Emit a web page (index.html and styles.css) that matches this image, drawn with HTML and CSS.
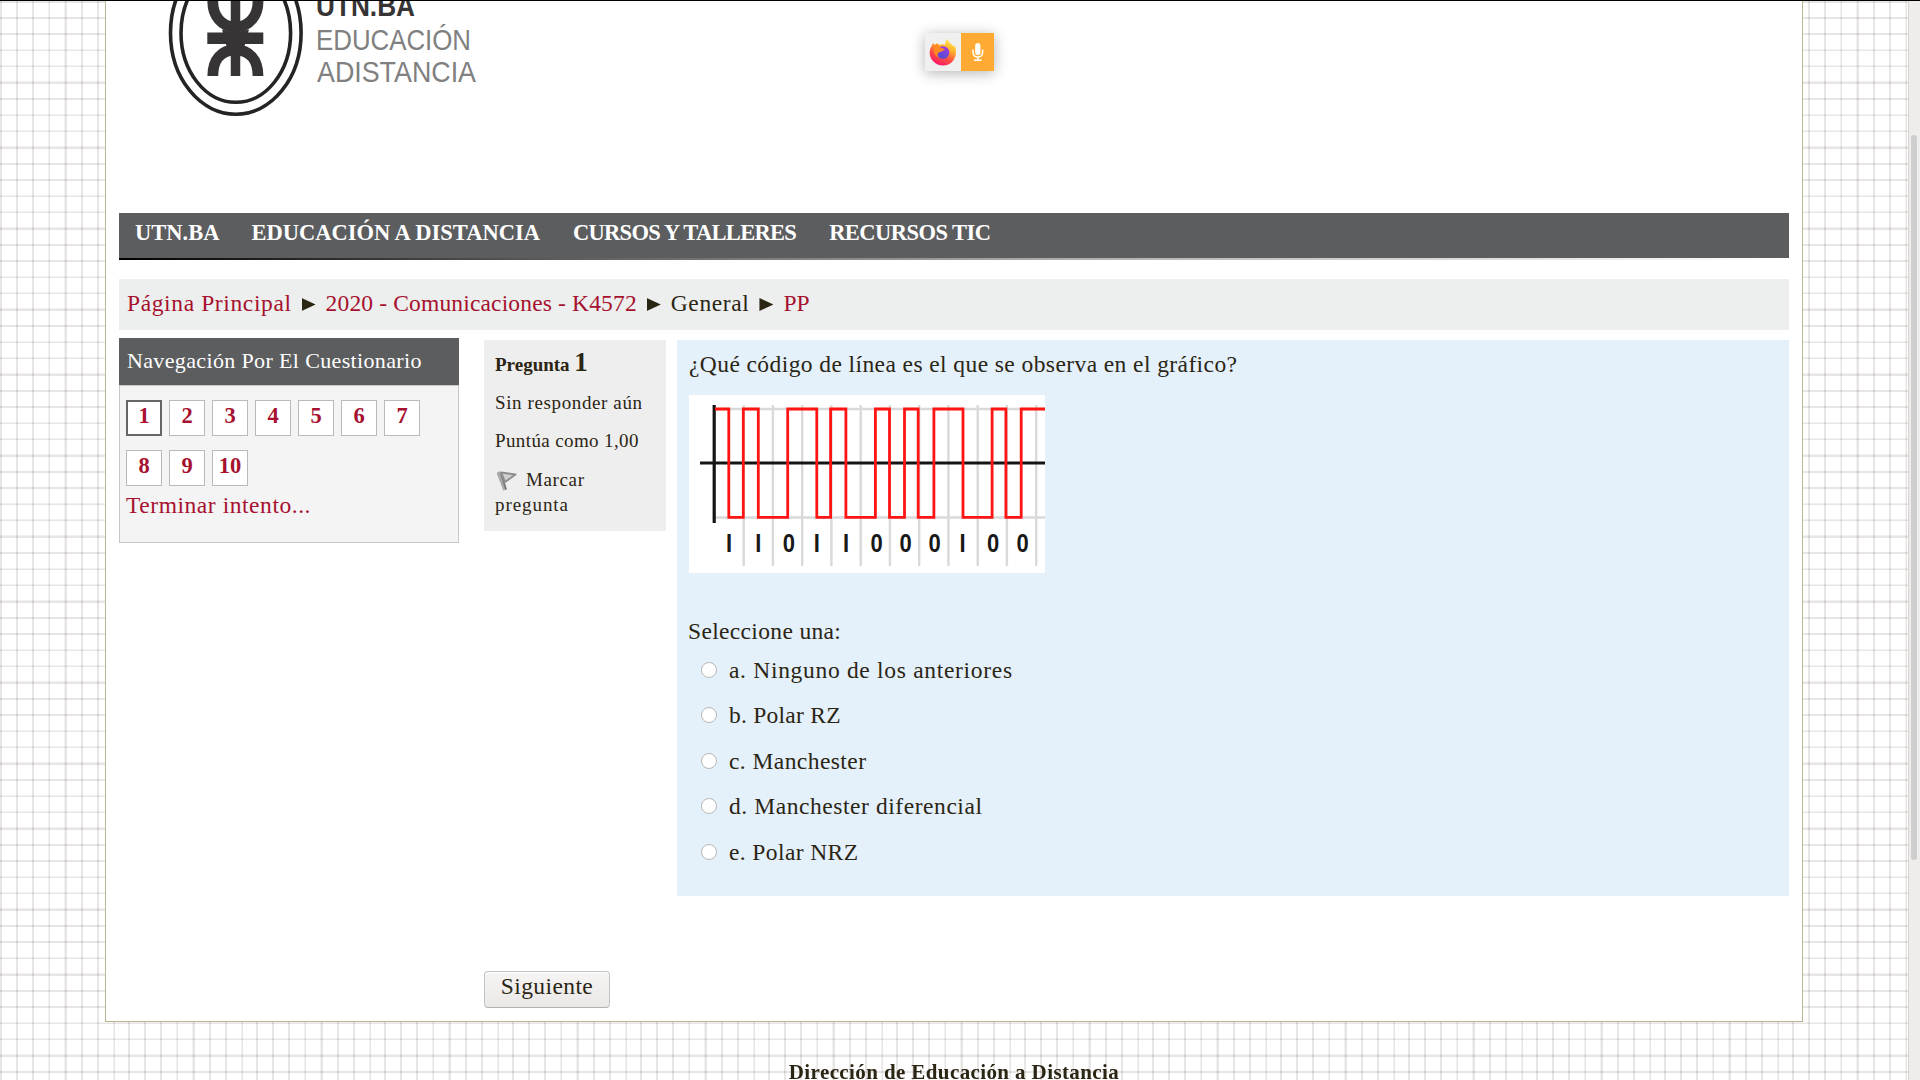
FILE: index.html
```html
<!DOCTYPE html>
<html lang="es">
<head>
<meta charset="utf-8">
<title>PP - UTN.BA Educación a Distancia</title>
<link rel="stylesheet" href="styles.css">
</head>
<body>
<div class="view">
  <div class="canvas">
    <main class="page">
      <header class="header">
        <svg class="logo" width="400" height="130" viewBox="106 0 400 130">
          <g fill="none" stroke="#242424" stroke-width="3.6">
            <ellipse cx="235.8" cy="33" rx="65.3" ry="81.3"/>
            <ellipse cx="235.8" cy="33" rx="54.8" ry="69.3"/>
          </g>
          <g fill="none" stroke="#373435">
            <path d="M235.5 0V76" stroke-width="9.5"/>
            <path d="M207.3 38.2H263.3" stroke-width="11.4"/>
            <path d="M212.8 -6V2C212.8 15 221 27 235.4 27S258 15 258 2V-6" stroke-width="10.8"/>
            <path d="M212.8 76C212.8 59 222 50 235.4 50S258 59 258 76" stroke-width="10.8"/>
          </g>
          <path d="M222 29.500Q232 32 235.400 32T249 29.500L244 48H227z" fill="#373435"/>
          <text class="logo-name" x="316" y="16" textLength="99" lengthAdjust="spacingAndGlyphs">UTN.BA</text>
          <text class="logo-sub" x="316" y="50.2" textLength="155" lengthAdjust="spacingAndGlyphs">EDUCACIÓN</text>
          <text class="logo-sub" x="317" y="82" textLength="159" lengthAdjust="spacingAndGlyphs">ADISTANCIA</text>
        </svg>
      </header>

      <nav class="menu">
        <a>UTN.BA</a>
        <a class="m2">EDUCACIÓN A DISTANCIA</a>
        <a class="m3">CURSOS Y TALLERES</a>
        <a class="m4">RECURSOS TIC</a>
      </nav>

      <div class="crumbs">
        <a class="c1">Página Principal</a><i class="arrow"></i>
        <a class="c2">2020 - Comunicaciones - K4572</a><i class="arrow"></i>
        <span class="c3">General</span><i class="arrow"></i>
        <a>PP</a>
      </div>

      <div class="columns">
        <aside class="block">
          <h2>Navegación Por El Cuestionario</h2>
          <div class="block-body">
            <div class="numbers">
              <a class="current">1</a><a>2</a><a>3</a><a>4</a><a>5</a><a>6</a><a>7</a><a>8</a><a>9</a><a>10</a>
            </div>
            <a class="finish">Terminar intento...</a>
          </div>
        </aside>

        <section class="info">
          <h3>Pregunta <b>1</b></h3>
          <p class="state">Sin responder aún</p>
          <p class="grade">Puntúa como 1,00</p>
          <p class="flag"><svg width="21" height="21" viewBox="0 0 21 21" fill="none" stroke-linejoin="round"><path d="M1 2L8 20" stroke="#aaa" stroke-width="3.5"/><path d="M4 3L9 19.5" stroke="#777" stroke-width="1.8"/><path d="M4 2.5L18.5 4.5L8 12z" stroke="#8d8d8d" stroke-width="2" fill="#d0d0d0"/></svg><span class="mark">Marcar</span> <span class="mark2">pregunta</span></p>
        </section>

        <section class="question">
          <p class="prompt">¿Qué código de línea es el que se observa en el gráfico?</p>
          <svg class="chart" width="356" height="178" viewBox="0 0 356 178">
            <rect width="356" height="178" fill="#fff"/>
            <path d="M26 14H356M26 122.5H356M54.7 10V171M83.9 10V171M113.2 10V171M142.4 10V171M171.7 10V171M200.9 10V171M230.2 10V171M259.4 10V171M288.7 10V171M317.9 10V171M347.2 10V171" stroke="#d9d9d9" stroke-width="2.4" fill="none"/>
            <path d="M25.2 10V128M11 68H356" stroke="#151515" stroke-width="3.2"/>
            <path d="M26 14H39.8V122.3H54.3V14H69.3V122.3H98.7V14H127.8V122.3H141.6V14H156.9V122.3H186.4V14H200.5V122.3H215.5V14H229.2V122.3H244.9V14H274V122.3H303.1V14H316.9V122.3H332.2V14H356" stroke="#ff1414" stroke-width="2.8" fill="none"/>
            <g class="bits" transform="scale(.83 1)">
              <text x="48.4" y="157">I</text><text x="83.4" y="157">I</text><text x="120.3" y="157">0</text><text x="154" y="157">I</text><text x="189.1" y="157">I</text><text x="225.9" y="157">0</text><text x="261" y="157">0</text><text x="296" y="157">0</text><text x="329.7" y="157">I</text><text x="366.5" y="157">0</text><text x="402" y="157">0</text>
            </g>
          </svg>
          <p class="select">Seleccione una:</p>
          <ul class="answers">
            <li><i class="radio"></i><span class="a1">a. Ninguno de los anteriores</span></li>
            <li><i class="radio"></i><span class="a2">b. Polar RZ</span></li>
            <li><i class="radio"></i><span class="a3">c. Manchester</span></li>
            <li><i class="radio"></i><span class="a4">d. Manchester diferencial</span></li>
            <li><i class="radio"></i><span class="a5">e. Polar NRZ</span></li>
          </ul>
        </section>
      </div>

      <button class="next">Siguiente</button>
    </main>
    <footer class="footer">Dirección de Educación a Distancia</footer>
  </div>
  <div class="scrollbar"><div class="thumb"></div></div>

  <div class="sharing">
    <div class="browser">
      <svg width="28" height="28" viewBox="0 0 28 28">
        <defs>
          <linearGradient id="fox" x1=".8" y1="0" x2=".3" y2="1"><stop offset="0" stop-color="#fff04a"/><stop offset=".35" stop-color="#ffb02e"/><stop offset=".65" stop-color="#ff5140"/><stop offset="1" stop-color="#f5156c"/></linearGradient>
          <linearGradient id="globe" x1=".6" y1="0" x2=".3" y2="1"><stop offset="0" stop-color="#a03be0"/><stop offset="1" stop-color="#4a4ed0"/></linearGradient>
        </defs>
        <path d="M18 1C19 4 23 6 24.5 8.500L26 7.500C28 14 27 19 24 23C19 29 9 29 4 23C0 19 0 13 2 9L4 5L6 7L8 5L10 7C12 6 15 6 16 7C16 5 17 2 18 1z" fill="url(#fox)"/>
        <circle cx="14" cy="14.500" r="6.300" fill="url(#globe)"/>
        <path d="M5 7L9 6L11 9.500L16 11C15 13 12 13 11 14C8 15 8 18 10 20C5 18 4 12 5 7z" fill="#ff8a1f"/>
      </svg>
    </div>
    <div class="mic">
      <svg width="12" height="20" viewBox="0 0 12 20" fill="none" stroke="#fff"><rect x="3.200" y="1" width="5.200" height="12" rx="2.600" fill="#fff" stroke="none"/><path d="M1 7.500V10.500C1 16.500 10.600 16.500 10.600 10.500V7.500M5.800 15V18M2 18.200H9.600" stroke-width="1.500"/></svg>
    </div>
  </div>
</div>
</body>
</html>
```
FILE: styles.css
```css
* { box-sizing: border-box; }
body {
  margin: 0;
  color: #2b2514;
  font: 23.5px/30px "Palatino Linotype", "Liberation Serif", serif;
}
p, h2, h3, ul { margin: 0; padding: 0; }
a { color: #a6112f; }

.view {
  position: relative;
  display: flex;
  height: 1080px;
  overflow: hidden;
  border-top: 1px solid #000;
  background: #fff;
}
.canvas {
  flex: 1;
  min-width: 0;
  border-right: 1px solid #d8d2d0;
  background:
    repeating-linear-gradient(90deg, #e8e5e5 0 1.6px, #fff 1.6px 15.6px, #f3f1f1 15.6px 16.25px) 0 0 / 128px 100%,
    #fff;
  position: relative;
}
.canvas::before {
  content: "";
  position: absolute;
  inset: 0;
  background: repeating-linear-gradient(180deg, #e8e5e5 0 1.6px, transparent 1.6px 15.6px, #f3f1f1 15.6px 16.215px);
  mix-blend-mode: multiply;
}

.page {
  position: relative;
  width: 1698px;
  height: 1021px;
  margin-left: 105px;
  padding: 0 13px;
  border: 1px solid #bab894;
  border-top: 0;
  background: #fff;
}
.header { height: 212px; }
.logo { position: relative; top: -1px; display: block; margin-left: -13px; }
.logo-name { font: bold 30px "Liberation Sans", sans-serif; fill: #373435; }
.logo-sub { font: 30px "Liberation Sans", sans-serif; fill: #808080; }

.menu {
  display: flex;
  gap: 33px;
  height: 47px;
  padding-left: 16px;
  background:
    linear-gradient(90deg, #000, #58585a 25%, #aaaaac 55%, #fff) 0 100% / 100% 2px no-repeat,
    #5c5d5f;
  font-weight: bold;
  font-size: 22.5px;
  line-height: 39px;
}
.menu a { color: #fff; white-space: nowrap; }
.m2 { margin-left: -1px; letter-spacing: .0003em; }
.m3 { letter-spacing: -.031em; }
.m4 { letter-spacing: -.024em; }

.crumbs {
  display: flex;
  height: 51px;
  margin-top: 19px;
  padding-left: 8px;
  background: #edefee;
  line-height: 48px;
}
.arrow {
  width: 14px;
  height: 13px;
  margin: 19px 10px 0;
  background: #2b2514;
  clip-path: polygon(0 0, 100% 50%, 0 100%);
}
.c1 { letter-spacing: .0264em; }
.c2 { letter-spacing: .0065em; }
.c3 { letter-spacing: .0258em; }

.columns { display: flex; align-items: flex-start; margin-top: 8px; }
.block { width: 340px; }
.block h2 {
  height: 47px;
  padding-left: 8px;
  background: #5c5d5f;
  color: #fff;
  font-weight: normal;
  font-size: 22px;
  line-height: 45px;
  letter-spacing: .0163em;
}
.block-body {
  height: 158px;
  padding: 14px 6px 0;
  border: 1px solid #c6c8c7;
  background: #f4f4f4;
}
.numbers { display: flex; flex-wrap: wrap; gap: 14px 7px; }
.numbers a {
  width: 36px;
  height: 36px;
  border: 1px solid #bababa;
  background: #fff;
  font-weight: bold;
  font-size: 22.5px;
  line-height: 30px;
  text-align: center;
}
.numbers .current { border: 2px solid #666; line-height: 28px; }
.finish { display: block; margin-top: 4px; letter-spacing: .0235em; }

.info {
  width: 182px;
  height: 191px;
  margin: 2px 11px 0 25px;
  padding: 12px 11px;
  background: #eee;
  font-size: 19px;
  line-height: 25px;
}
.info h3 { height: 25px; font-size: 19px; line-height: 25px; }
.info h3 b { font-size: 27px; line-height: 20px; }
.info p { margin-top: 13px; white-space: nowrap; }
.info .flag { margin-top: 14px; white-space: normal; }
.flag svg { margin: 0 8px -5px 2px; }
.state { letter-spacing: .0323em; }
.grade { letter-spacing: .0202em; }
.mark { letter-spacing: .0332em; }
.mark2 { letter-spacing: .0491em; }

.question {
  flex: 1;
  height: 556px;
  margin-top: 2px;
  padding: 9px 12px;
  background: #e4f0fa;
}
.prompt { letter-spacing: .0176em; }
.chart { display: block; margin-top: 16px; }
.bits { font: bold 26.5px "Liberation Sans", sans-serif; fill: #181818; text-anchor: middle; }
.select { margin: 43px 0 0 -1px; letter-spacing: .0145em; }
.answers { margin-top: 1px; list-style: none; }
.answers li { display: flex; align-items: center; height: 45.5px; padding-left: 12px; }
.radio {
  width: 16px;
  height: 16px;
  margin-right: 12px;
  border: 1px solid #b9b7b5;
  border-radius: 50%;
  background: #fff;
}
.a1 { letter-spacing: .0295em; }
.a2 { letter-spacing: .0106em; }
.a3 { letter-spacing: .0184em; }
.a4 { letter-spacing: .024em; }
.a5 { letter-spacing: .0168em; }

.next {
  display: block;
  width: 126px;
  height: 37px;
  margin: 75px 0 0 365px;
  padding: 0 0 7px;
  border: 1px solid #c5c3c0;
  border-bottom-color: #b3b1ae;
  border-radius: 4px;
  background: linear-gradient(#f6f5f4, #e9e8e6);
  box-shadow: inset 0 1px #fff;
  color: inherit;
  font: inherit;
  line-height: 28px;
  letter-spacing: .0172em;
}

.footer {
  position: relative;
  margin-top: 35px;
  font-weight: bold;
  font-size: 21px;
  line-height: 30px;
  text-align: center;
  letter-spacing: .0188em;
}

.scrollbar { width: 11px; padding: 134px 0 0 5px; background: #eeedeb; }
.scrollbar { padding-left: 2px; }
.thumb { width: 6px; height: 725px; border-radius: 3px; background: #cecece; }

.sharing {
  position: absolute;
  top: 32px;
  left: 925px;
  display: flex;
  height: 38px;
  box-shadow: 0 2px 14px rgba(0, 0, 0, .3);
}
.browser, .mic { display: flex; align-items: center; justify-content: center; }
.browser { width: 36px; background: #f0f0f0; }
.mic { width: 33px; background: #fa3; }
```
